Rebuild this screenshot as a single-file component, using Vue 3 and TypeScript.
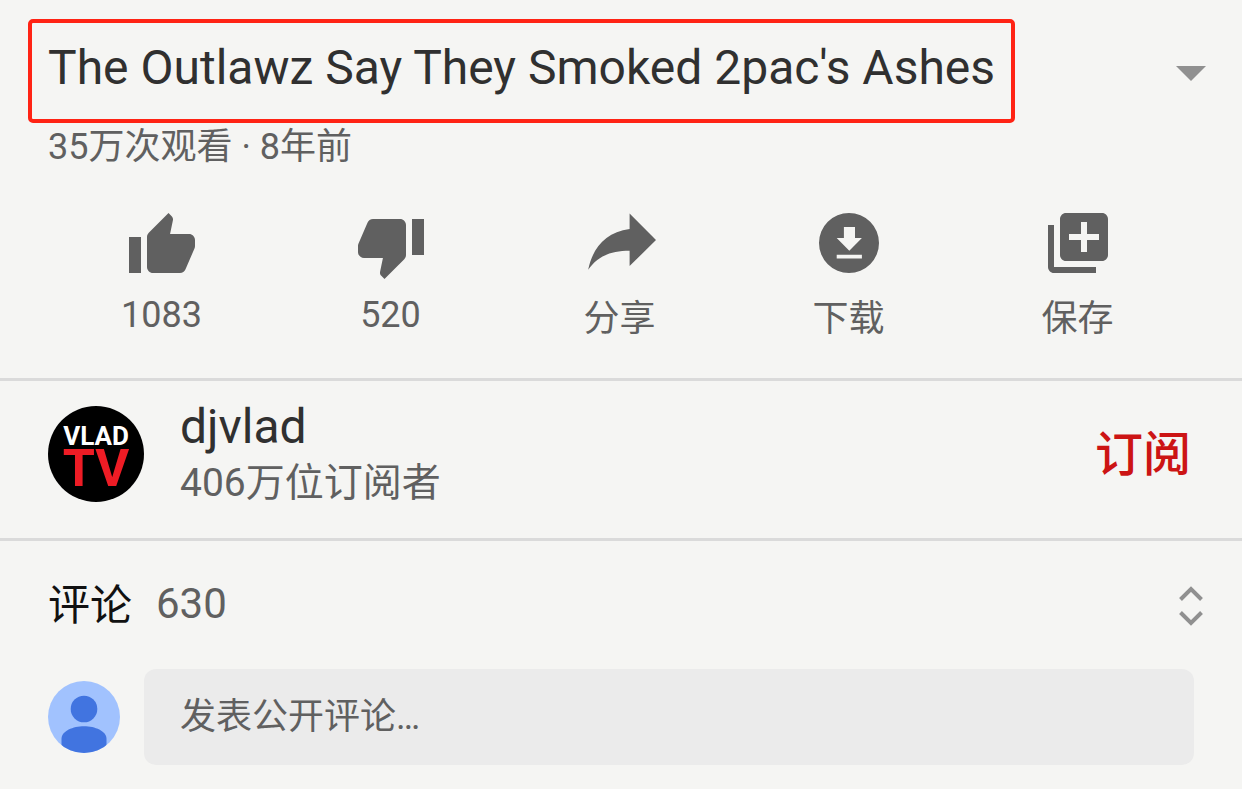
<script setup lang="ts">
import { ref } from 'vue'

interface Action {
  id: string
  label: string
  viewBox: string
  path: string
}

const actions: Action[] = [
  {
    id: 'like',
    label: '1083',
    viewBox: '0 0 24 24',
    path: 'M1 21h4V9H1v12zm22-11c0-1.1-.9-2-2-2h-6.31l.95-4.57.03-.32c0-.41-.17-.79-.44-1.06L14.17 1 7.59 7.59C7.22 7.95 7 8.45 7 9v10c0 1.1.9 2 2 2h9c.83 0 1.54-.5 1.84-1.22l3.02-7.05c.09-.23.14-.47.14-.73v-2z',
  },
  {
    id: 'dislike',
    label: '520',
    viewBox: '0 0 24 24',
    path: 'M15 3H6c-.83 0-1.54.5-1.84 1.22l-3.02 7.05c-.09.23-.14.47-.14.73v2c0 1.1.9 2 2 2h6.31l-.95 4.57-.03.32c0 .41.17.79.44 1.06L9.83 23l6.59-6.59c.36-.36.58-.86.58-1.41V5c0-1.1-.9-2-2-2zm4 0v12h4V3h-4z',
  },
  {
    id: 'share',
    label: '分享',
    viewBox: '0 0 24 24',
    path: 'M15.2 1.2V6.3C7.2 7.3 2.9 12.6 1.4 19.9C4.6 15.4 8.9 13.6 15.2 13.6V18.7L24 10z',
  },
  {
    id: 'download',
    label: '下载',
    viewBox: '0 0 24 24',
    path: 'M12 1a10 10 0 1 0 0 20a10 10 0 1 0 0-20zM10.3 5.7H14V9.3h2.3L12.1 13.6 7.9 9.3h2.4zM7.9 14.9h8.4v1.3H7.9z',
  },
  {
    id: 'save',
    label: '保存',
    viewBox: '0 1 24 24',
    path: 'M4 6H2v14c0 1.1.9 2 2 2h14v-2H4V6zm16-4H8c-1.1 0-2 .9-2 2v12c0 1.1.9 2 2 2h12c1.1 0 2-.9 2-2V4c0-1.1-.9-2-2-2zm-1 9h-4v4h-2v-4H9V9h4V5h2v4h4v2z',
  },
]

const isCount = (label: string): boolean => /^\d+$/.test(label)

const comment = ref('')
</script>

<template>
  <main class="page">
    <header class="video">
      <div class="title-row">
        <h1 class="title">The Outlawz Say They Smoked 2pac's Ashes</h1>
        <button class="expand" type="button" aria-label="展开">
          <svg width="30" height="15" viewBox="0 0 30 15"><path d="M0 0h30L15 15z" fill="#909090" /></svg>
        </button>
      </div>
      <p class="meta">35万次观看 · 8年前</p>
    </header>

    <nav class="actions">
      <button v-for="a in actions" :key="a.id" class="action" type="button">
        <svg width="72" height="72" :viewBox="a.viewBox" aria-hidden="true">
          <path :d="a.path" fill="#606060" fill-rule="evenodd" />
        </svg>
        <span class="action-label" :class="{ count: isCount(a.label) }">{{ a.label }}</span>
      </button>
    </nav>

    <section class="channel">
      <svg class="logo" width="96" height="96" viewBox="0 0 96 96" role="img" aria-label="VLAD TV">
        <circle cx="48" cy="48" r="48" fill="#000" />
        <text class="logo-text" x="48" y="39" font-size="26" fill="#fff" text-anchor="middle">VLAD</text>
        <text class="logo-text" x="48" y="80" font-size="52" fill="#ee1c25" text-anchor="middle">TV</text>
      </svg>
      <div class="channel-info">
        <h2 class="channel-name">djvlad</h2>
        <p class="subscribers">406万位订阅者</p>
      </div>
      <button class="subscribe" type="button">订阅</button>
    </section>

    <section class="comments">
      <div class="comments-head">
        <h2 class="comments-title">评论</h2>
        <span class="comments-count">630</span>
        <button class="sort" type="button" aria-label="排序">
          <svg width="24" height="40" viewBox="0 0 24 40" fill="none" stroke="#909090" stroke-width="4">
            <path d="M1.5 13.5L12 3l10.5 10.5M1.5 26.5L12 37l10.5-10.5" />
          </svg>
        </button>
      </div>
      <form class="composer" @submit.prevent>
        <svg width="72" height="72" viewBox="0 0 72 72" aria-hidden="true">
          <clipPath id="user-clip"><circle cx="36" cy="36" r="36" /></clipPath>
          <g clip-path="url(#user-clip)">
            <rect width="72" height="72" fill="#a1c2fe" />
            <circle cx="36" cy="28" r="13.3" fill="#4174e0" />
            <path d="M13.5 72V58C13.5 50 25 45.3 36 45.3S58.5 50 58.5 58V72z" fill="#4174e0" />
          </g>
        </svg>
        <input v-model="comment" class="field" type="text" aria-label="发表公开评论" placeholder="发表公开评论…" />
      </form>
    </section>
  </main>
</template>

<style>
body {
  margin: 0;
  background: #f5f5f3;
}
</style>

<style scoped>
.page {
  font-family: Roboto, "Noto Sans CJK SC", sans-serif;
  color: #606060;
  background: #f5f5f3;
}

h1,
h2,
p {
  margin: 0;
  font-weight: 400;
}

button {
  padding: 0;
  border: 0;
  background: none;
  font: inherit;
  color: inherit;
  cursor: pointer;
}

svg {
  display: block;
  flex: none;
}

.video {
  padding: 19px 36px 0 28px;
}

.title-row {
  display: flex;
  align-items: center;
  justify-content: space-between;
}

.title {
  padding: 17px 16px 23px;
  border: 4px solid #ff2314;
  border-radius: 5px;
  font-size: 48px;
  line-height: 56px;
  color: #303030;
}

.expand {
  padding-top: 5px;
}

.meta {
  padding-left: 20px;
  font-size: 36px;
  line-height: 48px;
}

.actions {
  display: grid;
  grid-template-columns: repeat(5, 1fr);
  padding: 39px 50px 35px 47px;
  border-bottom: 3px solid #dadada;
}

.action {
  display: flex;
  flex-direction: column;
  align-items: center;
}

.action-label {
  padding-top: 13px;
  font-size: 36px;
  line-height: 48px;
}

.action-label.count {
  padding-top: 9px;
}

.channel {
  display: flex;
  align-items: center;
  padding: 16px 51px 28px 48px;
  border-bottom: 3px solid #dadada;
}

.logo-text {
  font-weight: 700;
}

.channel-info {
  flex: 1;
  padding-left: 36px;
}

.channel-name {
  font-size: 48px;
  line-height: 60px;
  color: #303030;
}

.subscribers {
  font-size: 39px;
  line-height: 53px;
}

.subscribe {
  padding-top: 2px;
  font-size: 48px;
  line-height: 56px;
  font-weight: 500;
  color: #cc1414;
}

.comments {
  padding: 37px 48px 24px;
}

.comments-head {
  display: flex;
  align-items: center;
  margin-right: -9px;
  font-size: 42px;
  line-height: 56px;
}

.comments-title {
  font-size: 42px;
  color: #111;
}

.comments-count {
  flex: 1;
  padding: 0 0 4px 24px;
  line-height: 52px;
}

.composer {
  display: flex;
  align-items: center;
  gap: 24px;
  padding-top: 35px;
}

.field {
  flex: 1;
  min-width: 0;
  height: 96px;
  box-sizing: border-box;
  padding: 0 36px;
  border: 0;
  border-radius: 12px;
  outline: 0;
  background: #ebebeb;
  font: inherit;
  font-size: 36px;
  color: #303030;
}

.field::placeholder {
  color: #606060;
  opacity: 1;
}
</style>
